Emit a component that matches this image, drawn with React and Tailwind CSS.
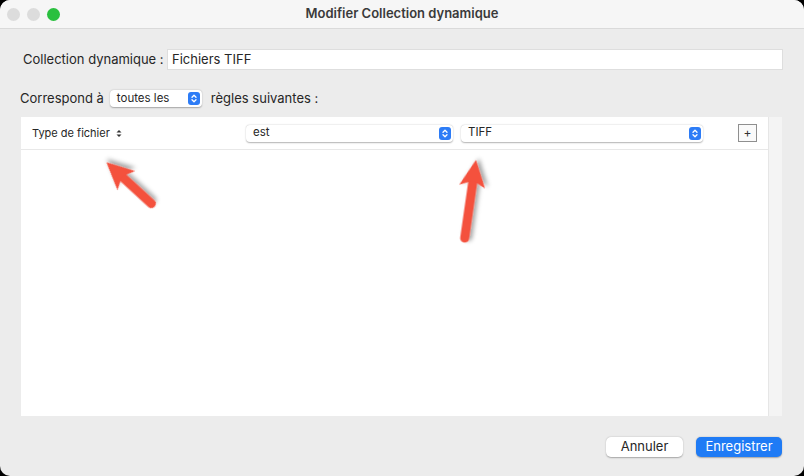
import React from "react";

function Stepper() {
  return (
    <span className="flex h-[13px] w-[12px] items-center justify-center rounded-[3px] bg-[#2d7cf6]">
      <svg width="6" height="9" viewBox="0 0 6 9" fill="none" stroke="white" strokeWidth="1.3" strokeLinecap="round" strokeLinejoin="round">
        <path d="M1 3.2 L3 1.2 L5 3.2" />
        <path d="M1 5.8 L3 7.8 L5 5.8" />
      </svg>
    </span>
  );
}

function Popup({ label, className }) {
  return (
    <div className={"flex h-[17px] items-center justify-between rounded-[4px] bg-white pl-[7px] pr-[2px] text-[11.5px] text-[#262626] shadow-[0_0.5px_1.5px_rgba(0,0,0,0.3)] " + className}>
      <span>{label}</span>
      <Stepper />
    </div>
  );
}

function Arrow({ x, y, angle, len }) {
  return (
    <g transform={`translate(${x} ${y}) rotate(${angle})`} filter="url(#shadow)">
      <line x1="5" y1="0" x2={len - 16} y2="0" stroke="#f4513e" strokeWidth="9" strokeLinecap="round" />
      <path d={`M${len} 0 L${len - 27} -13 L${len - 21} 0 L${len - 27} 13 Z`} fill="#f4513e" />
    </g>
  );
}

export default function App() {
  return (
    <div className="h-[476px] w-[804px] bg-black font-['Inter','Liberation_Sans',sans-serif]">
      <div className="relative flex h-full w-full flex-col overflow-hidden rounded-[10px] bg-[#ececec]">
        {/* title bar */}
        <div className="relative flex h-[29px] shrink-0 items-center justify-center border-b border-[#dadada] bg-[#f6f6f6]">
          <div className="absolute left-[7px] top-[8px] flex gap-[7px]">
            <span className="h-[13px] w-[13px] rounded-full bg-[#dcdcdc]" />
            <span className="h-[13px] w-[13px] rounded-full bg-[#dcdcdc]" />
            <span className="h-[13px] w-[13px] rounded-full bg-[#2ac03f]" />
          </div>
          <span className="text-[13px] font-semibold text-[#3a3a3a]">Modifier Collection dynamique</span>
        </div>

        {/* name row */}
        <div className="mt-[20px] flex h-[21px] items-center pl-[23px] pr-[21px]">
          <span className="w-[144px] text-[13px] text-[#262626]">Collection dynamique :</span>
          <div className="flex h-[21px] flex-1 items-center border border-[#dedede] bg-white pl-[4px] text-[13px] text-[#262626]">
            Fichiers TIFF
          </div>
        </div>

        {/* match row */}
        <div className="mt-[20px] flex h-[17px] items-center pl-[20px]">
          <span className="text-[13px] text-[#262626]">Correspond à</span>
          <Popup label="toutes les" className="ml-[6px] w-[92px]" />
          <span className="ml-[9px] text-[13px] text-[#262626]">règles suivantes :</span>
        </div>

        {/* rules table */}
        <div className="ml-[21px] mr-[22px] mt-[10px] flex h-[299px]">
          <div className="flex flex-1 flex-col bg-white">
            <div className="flex h-[33px] items-center border-b border-[#e8e8e8] pl-[11px]">
              <div className="flex w-[214px] items-center text-[11px] text-[#262626]">
                Type de fichier
                <svg className="ml-[6px]" width="6" height="9" viewBox="0 0 6 9" fill="#333">
                  <path d="M0.5 3.6 L3 1 L5.5 3.6 Z" />
                  <path d="M0.5 5.4 L3 8 L5.5 5.4 Z" />
                </svg>
              </div>
              <Popup label="est" className="w-[207px]" />
              <Popup label="TIFF" className="ml-[8px] w-[242px]" />
              <div className="ml-[35px] flex h-[18px] w-[19px] items-center justify-center border border-[#8f8f8f] bg-[#fafafa] text-[12px] leading-none text-[#333]">
                +
              </div>
            </div>
            <div className="flex-1" />
          </div>
          <div className="w-[14px] border-l border-[#e6e6e6] bg-[#f4f4f4]" />
        </div>

        {/* buttons */}
        <div className="mt-[21px] flex justify-end gap-[13px] pr-[22px]">
          <button className="h-[20px] w-[77px] rounded-[5px] bg-white text-[13px] text-[#262626] shadow-[0_0.5px_1.5px_rgba(0,0,0,0.3)]">
            Annuler
          </button>
          <button className="h-[20px] w-[86px] rounded-[5px] bg-[#1f7bf5] text-[13px] text-white shadow-[0_0.5px_1.5px_rgba(0,0,0,0.3)]">
            Enregistrer
          </button>
        </div>

        {/* annotation arrows */}
        <svg className="pointer-events-none absolute left-0 top-0" width="804" height="476">
          <defs>
            <filter id="shadow" x="-50%" y="-50%" width="200%" height="200%">
              <feDropShadow dx="2" dy="3" stdDeviation="2" floodColor="#000" floodOpacity="0.35" />
            </filter>
          </defs>
          <Arrow x={155} y={207} angle={222.6} len={66} />
          <Arrow x={464} y={243} angle={-81.8} len={84} />
        </svg>
      </div>
    </div>
  );
}
